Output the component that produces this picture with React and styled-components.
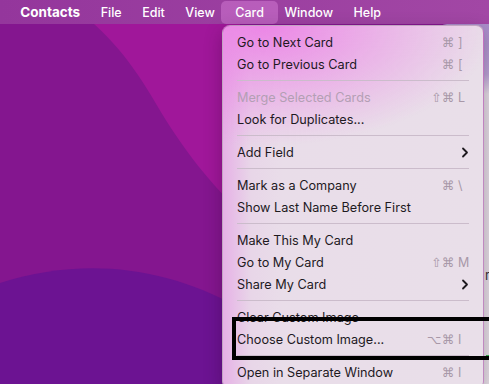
import React from "react";
import styled, { createGlobalStyle } from "styled-components";

const Global = createGlobalStyle`
  html, body { margin: 0; padding: 0; }
  body { width: 489px; height: 384px; overflow: hidden; }
`;

const Screen = styled.div`
  position: relative;
  width: 489px;
  height: 384px;
  overflow: hidden;
  background: #84168f;
  font-family: Inter, "Noto Sans", "DejaVu Sans", sans-serif;
  -webkit-font-smoothing: antialiased;
`;

const Wallpaper = styled.svg`
  position: absolute;
  inset: 0;
`;

const BackWindow = styled.div`
  position: absolute;
  left: 437px;
  top: 24px;
  width: 80px;
  height: 380px;
  border-radius: 10px 0 0 0;
  background: linear-gradient(180deg, #a98cc9 0px, #b9a3d4 50px, #e3dde4 70px, #e6e1e6 100%);
`;

const WindowText = styled.span`
  position: absolute;
  left: 48px;
  top: 243px;
  font-size: 13px;
  color: #333;
`;

const GreenMark = styled.div`
  position: absolute;
  left: 49px;
  top: 331px;
  width: 4px;
  height: 4px;
  background: #2fb84a;
`;

const MenuBar = styled.div`
  position: relative;
  display: flex;
  align-items: center;
  height: 24px;
  padding-left: 10px;
  background: linear-gradient(90deg, #94369c 0%, #9b3fa0 50%, #a247a5 100%);
  color: #fff;
`;

const BarItem = styled.div`
  display: flex;
  align-items: center;
  height: 23px;
  padding: 0 ${({ $active }) => ($active ? "14px" : "10.25px")};
  margin: 0 ${({ $active }) => ($active ? "-3.75px" : "0")};
  border-radius: 5px;
  font-size: ${({ $bold }) => ($bold ? "13.5px" : "12.5px")};
  font-weight: ${({ $bold }) => ($bold ? 700 : 500)};
  background: ${({ $active }) => ($active ? "rgba(220, 130, 220, 0.45)" : "transparent")};
`;

const Menu = styled.div`
  position: absolute;
  left: 222px;
  top: 25px;
  width: 262px;
  padding: 5px 5px;
  box-sizing: border-box;
  border-radius: 8px;
  border: 0.5px solid rgba(120, 60, 120, 0.35);
  box-shadow: 0 6px 18px rgba(40, 0, 40, 0.3);
  background:
    radial-gradient(ellipse 230px 120px at 40px 0px, rgba(236, 130, 230, 0.95), rgba(236, 130, 230, 0) 100%),
    linear-gradient(90deg, #e6b1e6 0px, #e8d6e8 28px, #e9dde9 60px, #e9dfe9 100%);
  font-size: 12.7px;
  color: #1e1a1f;
`;

const Item = styled.div`
  display: flex;
  align-items: center;
  justify-content: space-between;
  height: 22px;
  padding: 0 9px;
  color: ${({ $disabled }) => ($disabled ? "#b39fb4" : "#1e1a1f")};
`;

const Shortcut = styled.div`
  display: flex;
  align-items: center;
  color: #a898a8;
  font-family: "DejaVu Sans", sans-serif;
  font-size: 12.5px;
`;

const Mods = styled.span`
  letter-spacing: 0.5px;
`;

const Key = styled.span`
  width: 11px;
  padding-left: 3px;
  font-family: Inter, sans-serif;
  font-size: 12.5px;
`;

const Separator = styled.div`
  height: 1px;
  margin: 5px 9px;
  background: #cbbccb;
`;

const Highlight = styled.div`
  position: absolute;
  left: 232px;
  top: 317px;
  width: 270px;
  height: 43px;
  box-sizing: border-box;
  border: 4px solid #000;
`;

const Chevron = () => (
  <svg width="8" height="11" viewBox="0 0 8 11">
    <path d="M2 1.5 L6 5.5 L2 9.5" fill="none" stroke="#1e1a1f" strokeWidth="1.8" strokeLinecap="round" strokeLinejoin="round" />
  </svg>
);

const SC = ({ mods, k }) => (
  <Shortcut>
    <Mods>{mods}</Mods>
    <Key>{k}</Key>
  </Shortcut>
);

const groups = [
  [
    { label: "Go to Next Card", mods: "⌘", k: "]" },
    { label: "Go to Previous Card", mods: "⌘", k: "[" },
  ],
  [
    { label: "Merge Selected Cards", mods: "⇧⌘", k: "L", disabled: true },
    { label: "Look for Duplicates..." },
  ],
  [{ label: "Add Field", sub: true }],
  [
    { label: "Mark as a Company", mods: "⌘", k: "\\" },
    { label: "Show Last Name Before First" },
  ],
  [
    { label: "Make This My Card" },
    { label: "Go to My Card", mods: "⇧⌘", k: "M" },
    { label: "Share My Card", sub: true },
  ],
  [
    { label: "Clear Custom Image" },
    { label: "Choose Custom Image...", mods: "⌥⌘", k: "I" },
  ],
  [{ label: "Open in Separate Window", mods: "⌘", k: "I" }],
];

export default function App() {
  return (
    <>
      <Global />
      <Screen>
        <Wallpaper width="489" height="384" viewBox="0 0 489 384">
          <path d="M62 0 L240 0 L240 212 C205 178 178 142 152 97 C128 57 102 25 62 0 Z" fill="#a0179a" />
          <path d="M0 283 C80 258 160 264 240 308 L240 384 L0 384 Z" fill="#6c1392" />
        </Wallpaper>
        <BackWindow>
          <WindowText>r</WindowText>
          <GreenMark />
        </BackWindow>
        <MenuBar>
          <BarItem $bold>Contacts</BarItem>
          <BarItem>File</BarItem>
          <BarItem>Edit</BarItem>
          <BarItem>View</BarItem>
          <BarItem $active>Card</BarItem>
          <BarItem>Window</BarItem>
          <BarItem>Help</BarItem>
        </MenuBar>
        <Menu>
          {groups.map((g, gi) => (
            <React.Fragment key={gi}>
              {gi > 0 && <Separator />}
              {g.map((it) => (
                <Item key={it.label} $disabled={it.disabled}>
                  <span>{it.label}</span>
                  {it.sub ? <Chevron /> : it.mods ? <SC mods={it.mods} k={it.k} /> : null}
                </Item>
              ))}
            </React.Fragment>
          ))}
        </Menu>
        <Highlight />
      </Screen>
    </>
  );
}
